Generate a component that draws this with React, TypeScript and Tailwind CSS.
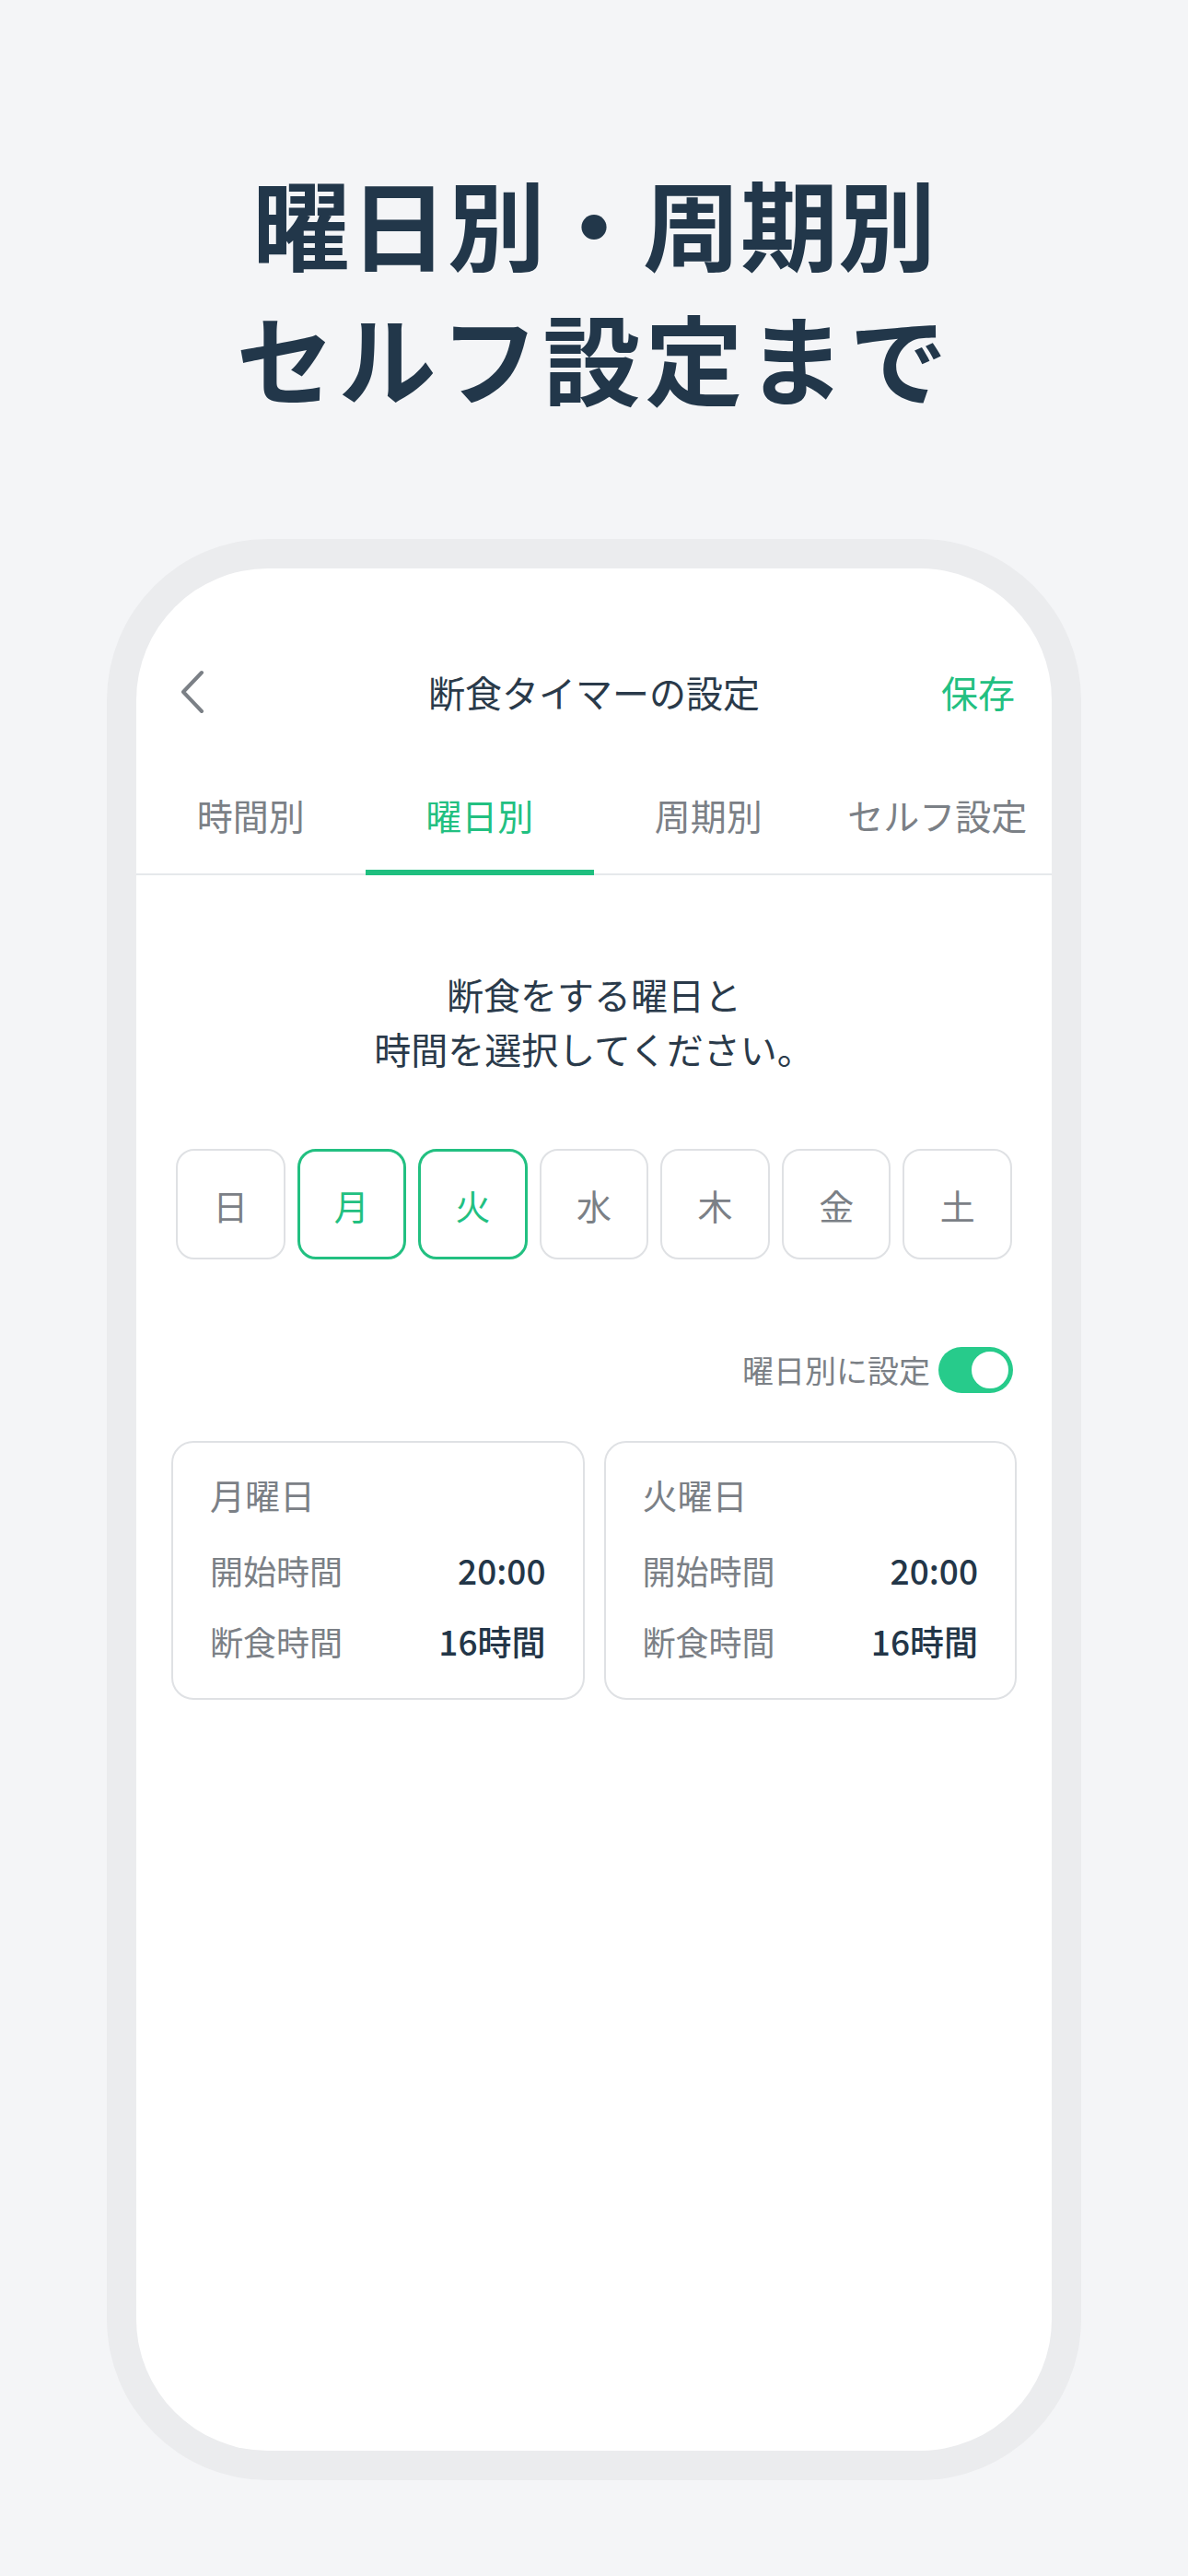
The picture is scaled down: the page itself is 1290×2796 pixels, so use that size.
import { useState } from "react";

const days = ["日", "月", "火", "水", "木", "金", "土"];
const tabs = ["時間別", "曜日別", "周期別", "セルフ設定"];

const font = { fontFamily: '"Noto Sans CJK JP", "Noto Sans", sans-serif' };

function DayCard({ day }: { day: string }) {
  return (
    <div className="rounded-[24px] border-2 border-[#dfe1e4] bg-white px-[40px] pt-[31px] pb-[37px]">
      <div className="text-[38px] leading-[50px] text-[#7b8086]">{day}曜日</div>
      <div className="mt-[32px] flex items-center justify-between leading-[50px]">
        <span className="text-[36px] text-[#7b8086]">開始時間</span>
        <span className="text-[37px] font-medium text-[#233648]">20:00</span>
      </div>
      <div className="mt-[27px] flex items-center justify-between leading-[50px]">
        <span className="text-[36px] text-[#7b8086]">断食時間</span>
        <span className="text-[37px] font-medium text-[#233648]">16時間</span>
      </div>
    </div>
  );
}

export default function App() {
  const [selected] = useState(["月", "火"]);

  return (
    <div className="min-h-[2796px] w-[1290px] bg-[#f4f5f7] pt-[167px]" style={font}>
      <h1 className="text-center text-[106px] font-bold leading-[146px] text-[#22374a]">
        曜日別・周期別
        <br />
        <span className="tracking-[5px]">セルフ設定まで</span>
      </h1>

      <div className="mx-auto mt-[126px] h-[2107px] w-[1058px] rounded-[175px] bg-[#ebecee] p-[32px]">
        <div className="h-full rounded-[143px] bg-white pt-[90px]">
          {/* nav */}
          <div className="relative flex h-[88px] items-center justify-center">
            <svg
              className="absolute left-[46px] top-[20px]"
              width="30"
              height="48"
              viewBox="0 0 30 48"
              fill="none"
            >
              <path d="M25 3 L5 24 L25 45" stroke="#7b8086" strokeWidth="4" strokeLinecap="round" strokeLinejoin="round" />
            </svg>
            <span className="text-[40px] text-[#2a3a4a]">断食タイマーの設定</span>
            <span className="absolute right-[40px] text-[40px] text-[#22c081]">保存</span>
          </div>

          {/* tabs */}
          <div className="mt-[30px] grid grid-cols-4 border-b-2 border-[#e6e8eb]">
            {tabs.map((t, i) => (
              <div key={t} className="flex flex-col">
                <div
                  className={
                    "flex h-[119px] items-center justify-center text-[39px] " +
                    (i === 1 ? "text-[#22c081]" : "text-[#7b8086]")
                  }
                >
                  {t}
                </div>
                <div className={"-mb-[2px] h-[6px] " + (i === 1 ? "bg-[#1fbf7f]" : "")} />
              </div>
            ))}
          </div>

          {/* instruction */}
          <p className="mt-[100px] text-center text-[40px] leading-[59px] text-[#2a3a4a]">
            断食をする曜日と
            <br />
            時間を選択してください。
          </p>

          {/* days */}
          <div className="mt-[79px] grid grid-cols-7 gap-[13px] px-[43px]">
            {days.map((d) => {
              const on = selected.includes(d);
              return (
                <div
                  key={d}
                  className={
                    "flex h-[120px] items-center justify-center rounded-[20px] text-[38px] " +
                    (on
                      ? "border-[3px] border-[#22c081] text-[#22c081]"
                      : "border-2 border-[#dfe1e4] text-[#7b8086]")
                  }
                >
                  {d}
                </div>
              );
            })}
          </div>

          {/* toggle */}
          <div className="mt-[94px] flex items-center justify-end gap-[9px] pr-[42px]">
            <span className="text-[34px] text-[#7b8086]">曜日別に設定</span>
            <div className="flex h-[50px] w-[81px] items-center justify-end rounded-full bg-[#27cb8b] p-[3px]">
              <div className="h-[44px] w-[44px] rounded-full border-2 border-[#27cb8b] bg-white" />
            </div>
          </div>

          {/* cards */}
          <div className="mt-[52px] grid grid-cols-2 gap-[21px] px-[38px]">
            {selected.map((d) => (
              <DayCard key={d} day={d} />
            ))}
          </div>
        </div>
      </div>
    </div>
  );
}
